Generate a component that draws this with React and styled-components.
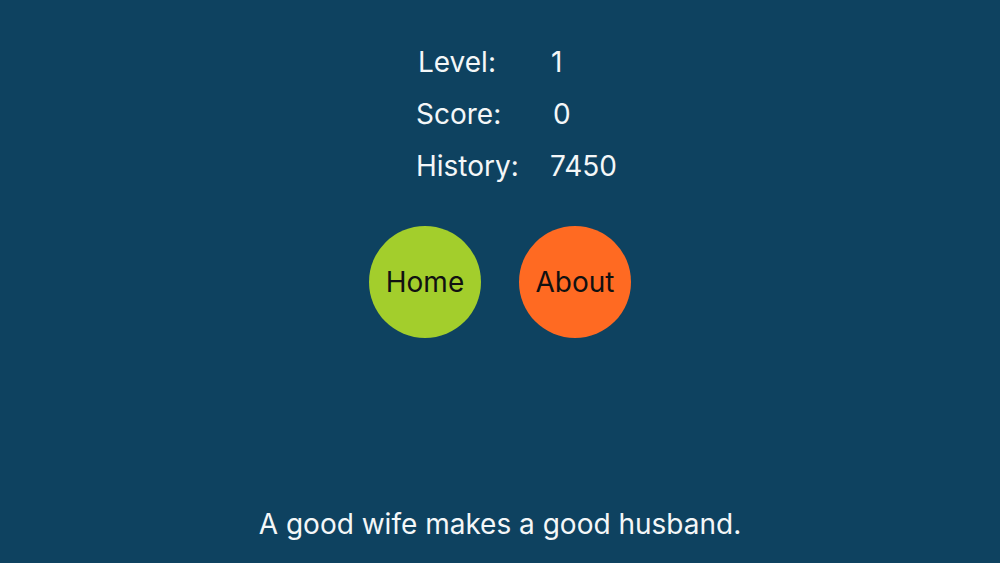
import React from "react";
import styled, { createGlobalStyle } from "styled-components";

const Global = createGlobalStyle`
  html, body { margin: 0; padding: 0; background: #0e4260; }
  body { font-family: Inter, "Noto Sans", "Liberation Sans", sans-serif; }
`;

const Page = styled.div`
  height: 563px;
  display: flex;
  flex-direction: column;
  align-items: center;
  background: #0e4260;
  color: #f4f7f8;
  box-sizing: border-box;
  padding-top: 43px;
`;

const Stats = styled.div`
  display: grid;
  grid-template-columns: 134px 70px;
  row-gap: 14px;
  margin-left: 36px;
`;

const Label = styled.div`
  font-size: 28px;
  line-height: 38px;
  margin-left: ${(p) => p.$indent || 0}px;
`;

const Value = styled.div`
  font-size: 28px;
  line-height: 38px;
  margin-left: ${(p) => p.$indent || 0}px;
`;

const Buttons = styled.div`
  display: flex;
  gap: 38px;
  margin-top: 41px;
`;

const Circle = styled.button`
  width: 112px;
  height: 112px;
  border-radius: 50%;
  border: none;
  background: ${(p) => p.$color};
  color: #111;
  font-family: inherit;
  font-size: 28px;
  padding: 0;
  display: flex;
  align-items: center;
  justify-content: center;
`;

const Spacer = styled.div`
  flex: 1;
`;

const Quote = styled.div`
  font-size: 28px;
  line-height: 38px;
  margin-bottom: 20px;
`;

export default function App() {
  return (
    <>
      <Global />
      <Page>
        <Stats>
          <Label $indent={2}>Level:</Label>
          <Value $indent={1}>1</Value>
          <Label>Score:</Label>
          <Value $indent={3}>0</Value>
          <Label>History:</Label>
          <Value>7450</Value>
        </Stats>
        <Buttons>
          <Circle $color="#a3ce2c">Home</Circle>
          <Circle $color="#ff6a22">About</Circle>
        </Buttons>
        <Spacer />
        <Quote>A good wife makes a good husband.</Quote>
      </Page>
    </>
  );
}
